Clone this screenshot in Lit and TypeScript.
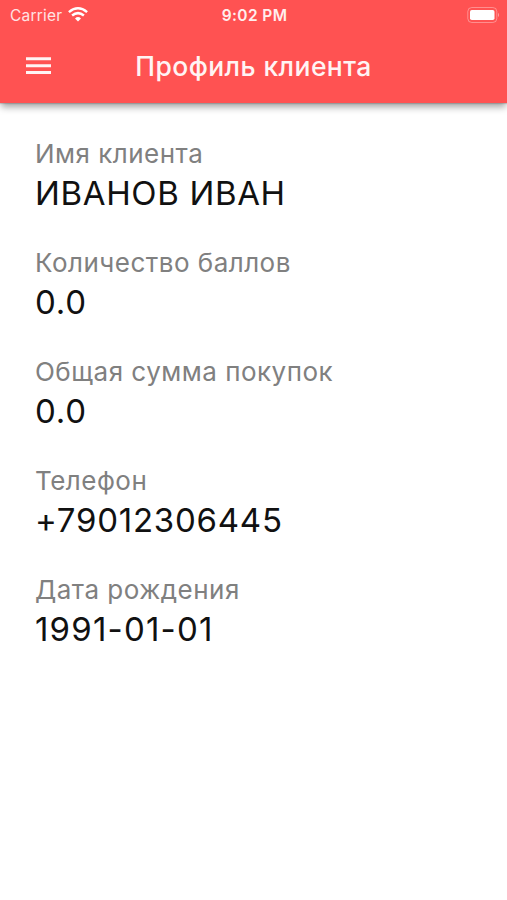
import { LitElement, html, css } from "lit";
import { customElement } from "lit/decorators.js";

@customElement("app-root")
export class AppRoot extends LitElement {
  static styles = css`
    :host { display: block; height: 900px; background: #fff; font-family: Inter, sans-serif; overflow: hidden; }
    header { height: 103px; background: #ff5252; color: #fff; box-shadow: 0 5px 7px -1px rgba(0,0,0,.36), 0 1px 1px rgba(0,0,0,.14); }
    .status { height: 30px; display: grid; grid-template-columns: 1fr auto 1fr; align-items: center; padding: 0 8px 0 10px; }
    .carrier { display: flex; align-items: center; gap: 6px; font-size: 15.5px; letter-spacing: .2px; color: #ffe3e3; }
    .time { font-size: 15.5px; font-weight: 600; letter-spacing: .4px; color: #ffeeee; }
    .battery { justify-self: end; display: block; margin-bottom: 1px; }
    .wifi { display: block; margin-bottom: 1px; }
    .bar { height: 72px; display: grid; grid-template-columns: 78px 1fr 78px; align-items: center; }
    .menu { display: block; margin-left: 26px; }
    h1 { margin: 0; text-align: center; font-size: 26.5px; font-weight: 550; letter-spacing: .42px; line-height: 32px; white-space: nowrap; color: #fff4f4; }
    main { padding: 33px 35px; display: flex; flex-direction: column; gap: 32.1px; }
    .label { font-size: 26px; line-height: 36px; letter-spacing: .48px; color: #808080; white-space: nowrap; }
    .value { padding-top: 1px; font-size: 33px; line-height: 40px; color: #111; white-space: nowrap; }
    .name { letter-spacing: .65px; }
    .number { letter-spacing: .76px; }
    .date { letter-spacing: 1.2px; }
  `;

  private fields = [
    ["Имя клиента", "ИВАНОВ ИВАН", "name"],
    ["Количество баллов", "0.0", "number"],
    ["Общая сумма покупок", "0.0", "number"],
    ["Телефон", "+79012306445", "number"],
    ["Дата рождения", "1991-01-01", "date"],
  ];

  render() {
    return html`<header>
        <div class="status">
          <div class="carrier"><span>Carrier</span>
            <svg class="wifi" width="20" height="15" viewBox="0 0 20 15" fill="none" stroke="#fff" stroke-width="2.5"><path d="M.9 5.1Q10-2.5 19.1 5.1M4.1 8.5Q10 3.7 15.9 8.5"/><path d="M10 14.5L7 11.4Q10 8.8 13 11.4Z" fill="#fff" stroke="none"/></svg>
          </div>
          <div class="time">9:02 PM</div>
          <svg class="battery" width="32" height="16" viewBox="0 0 32 16"><rect x=".8" y=".5" width="29" height="15" rx="4" fill="none" stroke="#fff" stroke-opacity=".35"/><rect x="3" y="3" width="24.5" height="10" rx="1.8" fill="#fff"/><path d="M31 5.7q1 .8 1 2.2t-1 2.2z" fill="#fff" fill-opacity=".45"/></svg>
        </div>
        <div class="bar">
          <svg class="menu" width="26" height="18" viewBox="0 0 26 18" fill="#fff4f4"><path d="M0 .3h25v3H0zM0 7.2h25v3H0zM0 14h25v3H0z"/></svg>
          <h1>Профиль клиента</h1>
        </div>
      </header>
      <main>${this.fields.map(([label, value, kind]) => html`<section><div class="label">${label}</div><div class="value ${kind}">${value}</div></section>`)}</main>`;
  }
}
